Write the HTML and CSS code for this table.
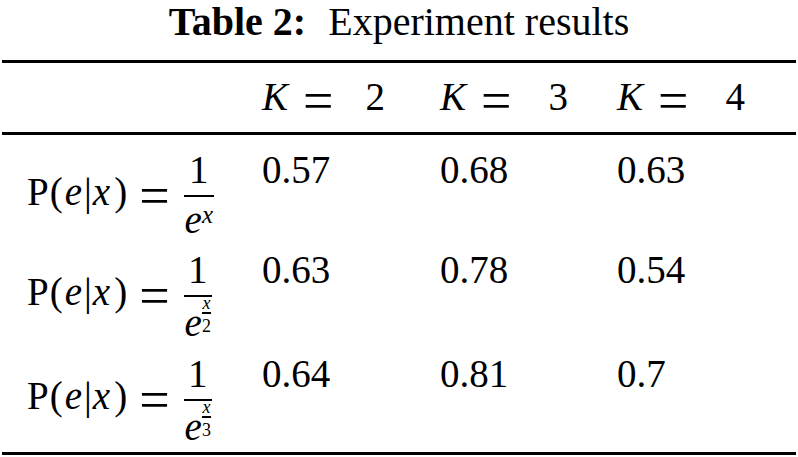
FILE: index.html
```html
<!DOCTYPE html>
<html>
<head>
<meta charset="utf-8">
<link rel="stylesheet" href="styles.css">
</head>
<body>
<div class="caption"><span class="label">Table 2:</span> Experiment results</div>
<div class="table">
  <div class="rule"></div>
  <div class="row head">
    <div class="cell first"></div>
    <div class="cell"><i class="mi">K</i><span class="eq">=</span><span class="hv hv-a">2</span></div>
    <div class="cell"><i class="mi">K</i><span class="eq">=</span><span class="hv">3</span></div>
    <div class="cell"><i class="mi">K</i><span class="eq">=</span><span class="hv">4</span></div>
  </div>
  <div class="rule"></div>

  <div class="row data">
    <div class="cell first formula">
      <span class="lhs">P<span class="po">(</span><i class="ve">e</i><span class="vb">|</span><i class="vx">x</i><span class="pc">)</span><span class="eq">=</span></span>
      <span class="frac">
        <span class="num">1</span>
        <span class="fbar"></span>
        <span class="den"><i class="base">e</i><i class="sup">x</i></span>
      </span>
    </div>
    <div class="cell val">0.57</div>
    <div class="cell val">0.68</div>
    <div class="cell val">0.63</div>
  </div>

  <div class="row data">
    <div class="cell first formula">
      <span class="lhs">P<span class="po">(</span><i class="ve">e</i><span class="vb">|</span><i class="vx">x</i><span class="pc">)</span><span class="eq">=</span></span>
      <span class="frac">
        <span class="num">1</span>
        <span class="fbar"></span>
        <span class="den tall"><i class="base">e</i><span class="sfrac"><i class="sn">x</i><span class="sbar"></span><span class="sd">2</span></span></span>
      </span>
    </div>
    <div class="cell val">0.63</div>
    <div class="cell val">0.78</div>
    <div class="cell val">0.54</div>
  </div>

  <div class="row data last">
    <div class="cell first formula">
      <span class="lhs">P<span class="po">(</span><i class="ve">e</i><span class="vb">|</span><i class="vx">x</i><span class="pc">)</span><span class="eq">=</span></span>
      <span class="frac">
        <span class="num">1</span>
        <span class="fbar"></span>
        <span class="den tall"><i class="base">e</i><span class="sfrac"><i class="sn">x</i><span class="sbar"></span><span class="sd">3</span></span></span>
      </span>
    </div>
    <div class="cell val">0.64</div>
    <div class="cell val">0.81</div>
    <div class="cell val">0.7</div>
  </div>
  <div class="rule"></div>
</div>
</body>
</html>
```

FILE: styles.css
```css
* { box-sizing: border-box; }

body {
  margin: 0;
  width: 798px;
  background: #fff;
  color: #000;
  font-family: "Liberation Serif", "Times New Roman", serif;
  font-size: 39px;
}

.caption {
  height: 44px;
  line-height: 44px;
  margin-bottom: 16px;
  font-size: 40px;
  text-align: center;
  white-space: nowrap;
}

.label {
  font-weight: bold;
  margin-right: 12px;
}

.table {
  margin: 0 2px;
}

.rule {
  height: 3px;
  background: #000;
}

.row {
  display: grid;
  grid-template-columns: 260px 178px 177px 1fr;
  align-items: start;
}

.cell {
  line-height: 39px;
  white-space: nowrap;
}

.first {
  padding-left: 25px;
}

i { font-style: italic; }

.eq {
  font-size: 54px;
  line-height: 0;
  vertical-align: -9px;
}

/* header */
.head {
  height: 69px;
  padding-top: 14px;
}

.head .eq { margin-left: 15px; }

.hv { margin-left: 37px; }
.hv-a { margin-left: 32px; }

/* data rows */
.data .val {
  padding-top: 15px;
}

.last {
  padding-bottom: 9px;
}

.formula {
  display: flex;
  align-items: flex-start;
}

.lhs {
  padding-top: 37px;
  line-height: 39px;
}

.po { margin-left: 1px; }
.ve { margin-left: 2px; }
.vb { margin-left: 2px; }
.vx { margin-left: 1px; }
.pc { margin-left: 4px; }
.lhs .eq { margin-left: 12px; }

.frac {
  display: flex;
  flex-direction: column;
  align-items: center;
  margin-left: 13px;
  padding: 0 1px;
}

.num {
  padding-top: 15px;
  line-height: 39px;
}

.fbar {
  align-self: stretch;
  height: 2px;
  margin-top: 6px;
  background: #000;
}

.den {
  display: flex;
  align-items: flex-start;
  height: 30px;
  margin-top: 8px;
  padding: 0 1px;
}

.den.tall {
  height: 31px;
  margin-top: 11px;
}

.base {
  line-height: 30px;
}

.sup {
  font-size: 25px;
  line-height: 20px;
}

.sfrac {
  display: flex;
  flex-direction: column;
  align-items: center;
  margin-top: -10px;
  font-size: 18px;
}

.sn {
  line-height: 11px;
}

.sbar {
  align-self: stretch;
  height: 2px;
  margin-top: 3px;
  background: #000;
}

.sd {
  line-height: 15px;
  margin-top: 5px;
}
```
